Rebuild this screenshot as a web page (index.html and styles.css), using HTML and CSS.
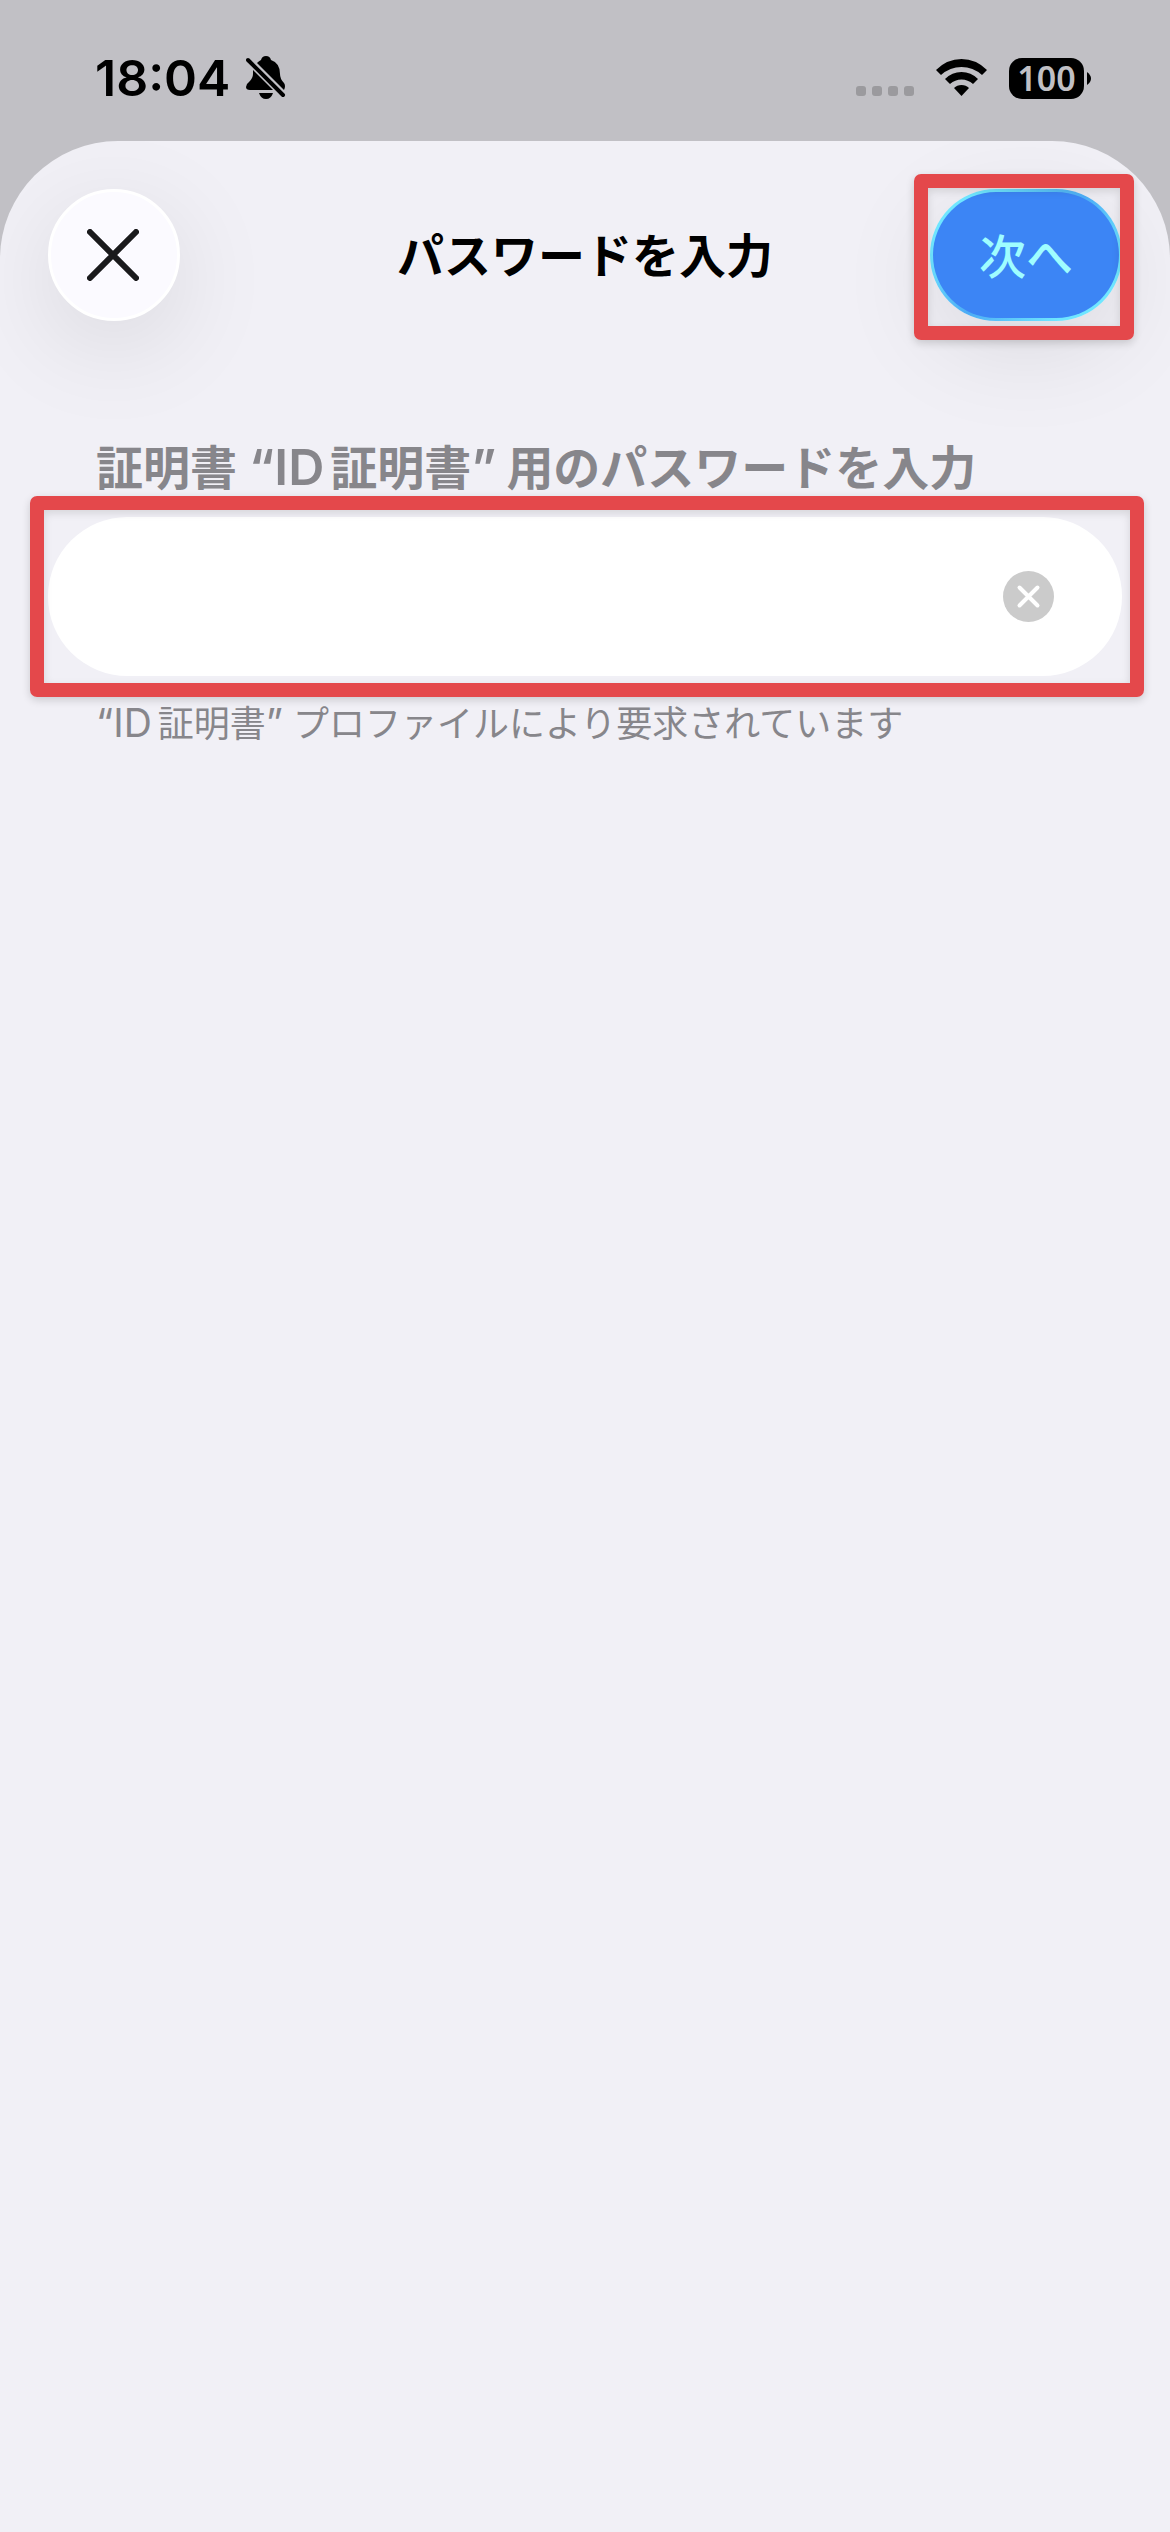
FILE: index.html
```html
<!DOCTYPE html>
<html lang="ja">
<head>
  <meta charset="utf-8">
  <meta name="viewport" content="width=device-width, initial-scale=1">
  <title>パスワードを入力</title>
  <link rel="stylesheet" href="styles.css">
</head>
<body>
  <div class="status-bar">
    <div class="status-left">
      <time class="clock">18:04</time>
      <svg class="bell" viewBox="0 0 40 44" aria-hidden="true">
        <path d="M7 14 L27 34 H4 Q0 34 0 31 Q0 28 3 26 Q7 22 7 18 Z"/>
        <path d="M11 7 Q13 5 15 4 Q16 0 20 0 Q24 0 25 4 Q34 7 34 18 Q34 23 38 27 Q40 30 38 34 Z"/>
        <path d="M13 37 H27 Q25 43 20 43 Q15 43 13 37 Z"/>
        <path class="slash" d="M2 4 L37 39"/>
      </svg>
    </div>
    <div class="status-right">
      <div class="signal"><i></i><i></i><i></i><i></i></div>
      <svg class="wifi" viewBox="0 0 51 38" aria-hidden="true">
        <path d="M0 11 Q11 0 25.5 0 Q40 0 51 11 L46 16 Q37 8 25.5 8 Q14 8 5 16 Z"/>
        <path d="M9 20 Q16 13 25.5 13 Q35 13 42 20 L37 25 Q32 20.5 25.5 20.5 Q19 20.5 14 25 Z"/>
        <path d="M18 29 Q21 26 25.5 26 Q30 26 33 29 L25.5 37 Z"/>
      </svg>
      <div class="battery">
        <span class="battery-level">100</span>
        <svg class="battery-tip" viewBox="0 0 4 13" aria-hidden="true"><path d="M0 0 Q4 3 4 6.5 Q4 10 0 13 Z"/></svg>
      </div>
    </div>
  </div>

  <main class="sheet">
    <header class="nav">
      <button class="close" type="button" aria-label="閉じる">
        <svg class="close-icon" viewBox="0 0 52 52" aria-hidden="true"><path d="M3 3 L49 49 M49 3 L3 49"/></svg>
      </button>
      <h1 class="title">パスワードを入力</h1>
      <button class="next highlight" type="submit" form="password-form">次へ</button>
    </header>

    <form class="form" id="password-form">
      <label class="label" for="password">証明書<span class="latin">“ID</span>証明書<span class="latin close-quote">”</span>用のパスワードを入力</label>
      <div class="field highlight">
        <input class="input" id="password" type="password" aria-describedby="hint">
        <button class="clear" type="button" aria-label="消去">
          <svg class="clear-icon" viewBox="0 0 51 51" aria-hidden="true">
            <circle cx="25.5" cy="25.5" r="25.5"/>
            <path d="M16.5 16.5 L34.5 34.5 M34.5 16.5 L16.5 34.5"/>
          </svg>
        </button>
      </div>
      <p class="hint" id="hint"><span class="latin">“ID</span>証明書<span class="latin close-quote">”</span>プロファイルにより要求されています</p>
    </form>
  </main>
</body>
</html>
```

FILE: styles.css
```css
* {
  box-sizing: border-box;
}

body {
  display: flex;
  flex-direction: column;
  min-height: 100vh;
  margin: 0;
  background: #c1c0c5;
  color: #000;
  font-family: "Noto Sans CJK JP", sans-serif;
}

button,
input {
  margin: 0;
  padding: 0;
  border: 0;
  font: inherit;
}

svg {
  display: block;
}

/* Status bar */
.status-bar {
  display: flex;
  justify-content: space-between;
  height: 141px;
  padding: 48px 79px 0 95px;
  font-family: Inter, sans-serif;
}

.status-left,
.status-right {
  display: flex;
  align-items: center;
  height: 60px;
}

.status-left {
  gap: 16px;
}

.clock {
  font-size: 50px;
  font-weight: 600;
  line-height: 60px;
}

.bell {
  width: 40px;
  height: 44px;
}

.slash {
  fill: none;
  stroke: #000;
  stroke-width: 4;
  stroke-linecap: round;
}

.status-right {
  gap: 22px;
}

.signal {
  display: flex;
  gap: 6px;
  padding-top: 26px;
}

.signal i {
  width: 10px;
  height: 10px;
  border-radius: 3px;
  background: #9b9a9e;
}

.wifi {
  width: 51px;
  height: 38px;
}

.battery {
  display: flex;
  align-items: center;
  gap: 3px;
}

.battery-level {
  width: 75px;
  height: 41px;
  border-radius: 13px;
  background: #000;
  color: #c1c0c5;
  font-family: "Noto Sans", sans-serif;
  font-size: 34px;
  font-weight: 600;
  line-height: 41px;
  text-align: center;
}

.battery-tip {
  width: 4px;
  height: 13px;
}

/* Sheet */
.sheet {
  flex: 1;
  overflow: hidden;
  border-radius: 118px 118px 0 0;
  background: #f1f0f6;
}

.nav {
  display: grid;
  grid-template-columns: 1fr auto 1fr;
  align-items: center;
  padding: 48px 48px 0;
}

.close,
.next {
  height: 132px;
  border-radius: 66px;
  box-shadow: 0 24px 100px rgba(0, 0, 0, 0.1);
}

.close {
  display: grid;
  place-items: center;
  width: 132px;
  padding-right: 3px;
  border: 3px solid #fff;
  background: #fbfaff;
}

.close-icon {
  width: 52px;
  height: 52px;
  fill: none;
  stroke: #1a1a1c;
  stroke-width: 6;
  stroke-linecap: round;
}

.title {
  margin: 0;
  padding-bottom: 4px;
  font-size: 47px;
  font-weight: 600;
  line-height: 60px;
}

.next {
  justify-self: end;
  width: 192px;
  padding-bottom: 4px;
  border: 3px solid transparent;
  background:
    linear-gradient(#3c85f5, #3c85f5) padding-box,
    linear-gradient(135deg, #6fe6ff 20%, #4cacf5 50%, #6fe6ff 80%) border-box;
  color: #9ffdff;
  font-size: 47px;
  font-weight: 500;
}

/* Red call-out frame drawn over a control */
.highlight {
  position: relative;
}

.highlight::after {
  content: "";
  position: absolute;
  inset: -21px -22px -21px -18px;
  border: 14px solid #e4484b;
  border-radius: 7px;
  box-shadow: 0 3px 8px rgba(0, 0, 0, 0.16), inset 0 3px 8px rgba(0, 0, 0, 0.12);
  pointer-events: none;
}

.next.highlight::after {
  inset: -18px -15px -22px -19px;
}

/* Form */
.form {
  display: flex;
  flex-direction: column;
  padding: 114px 48px 0;
}

.label,
.hint {
  padding: 0 48px;
  color: #87868b;
}

.label {
  padding-bottom: 22px;
  font-size: 47px;
  font-weight: 600;
  line-height: 60px;
}

.latin {
  font-family: Inter, sans-serif;
  line-height: 1;
}

.label .latin {
  margin: 0 6px 0 12px;
  font-size: 50px;
}

.hint .latin {
  margin-right: 6px;
  font-size: 39px;
}

.label .close-quote,
.hint .close-quote {
  margin: 0 10px 0 0;
}

.field {
  display: flex;
  align-items: center;
  height: 159px;
  padding: 0 68px 0 48px;
  border-radius: 80px;
  background: #fff;
}

.input {
  flex: 1;
  min-width: 0;
  height: 100%;
  outline: 0;
  background: transparent;
  font-size: 47px;
}

.clear {
  border-radius: 50%;
  background: none;
}

.clear-icon {
  width: 51px;
  height: 51px;
  fill: #cbcbcb;
  stroke: #fff;
  stroke-width: 4;
  stroke-linecap: round;
}

.clear-icon circle {
  stroke: none;
}

.hint {
  margin: 0;
  padding-top: 18px;
  font-size: 36px;
  line-height: 54px;
}
```
